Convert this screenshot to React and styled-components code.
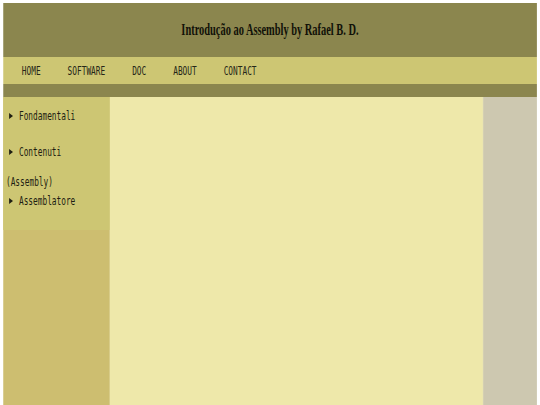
import React from "react";
import styled, { createGlobalStyle } from "styled-components";

const Global = createGlobalStyle`
  html, body {
    margin: 0;
    padding: 0;
    background: #ffffff;
    overflow: hidden;
  }
`;

const Stage = styled.div`
  width: 831px;
  padding: 3px 0 0 4.6px;
  box-sizing: border-box;
  transform: scaleX(0.65);
  transform-origin: 0 0;
`;

const Page = styled.div`
  width: 821.5px;
  display: flex;
  flex-direction: column;
`;

const Header = styled.header`
  height: 54px;
  background: #8b864e;
  display: flex;
  align-items: center;
  justify-content: center;
`;

const Title = styled.h1`
  margin: 0;
  font-family: "Liberation Serif", "Times New Roman", serif;
  font-weight: bold;
  font-size: 16px;
  color: #111108;
`;

const Nav = styled.nav`
  height: 27px;
  background: #cdc673;
  display: flex;
  align-items: center;
  gap: 41.5px;
  padding-left: 29px;
`;

const NavLink = styled.a`
  font-family: "DejaVu Sans Mono", monospace;
  font-size: 12px;
  color: #262618;
  text-decoration: none;
`;

const Band = styled.div`
  height: 13px;
  background: #8b864e;
`;

const Columns = styled.div`
  display: grid;
  grid-template-columns: 164.6px 573.8px 1fr;
  height: 320px;
`;

const Sidebar = styled.aside`
  background: #cdbe70;
`;

const SideBox = styled.div`
  background: #cdc673;
  padding: 9.5px 0 19.5px 4.6px;
  display: flex;
  flex-direction: column;
`;

const SideItem = styled.div`
  font-family: "DejaVu Sans Mono", monospace;
  font-size: 12px;
  line-height: 19px;
  color: #1e1e12;
  margin-top: ${(p) => p.$gap || 0}px;
  display: flex;
  align-items: center;
  padding-left: ${(p) => (p.$marker ? 4.6 : 0)}px;
`;

const Marker = styled.span`
  width: 0;
  height: 0;
  border-top: 3.5px solid transparent;
  border-bottom: 3.5px solid transparent;
  border-left: 6px solid #1e1e12;
  margin-right: 9.4px;
  flex: none;
`;

const Main = styled.main`
  background: #eee8aa;
`;

const Aside = styled.div`
  background: #cdc8b0;
  border-left: 1.5px solid #d9d4b4;
`;

const menu = ["HOME", "SOFTWARE", "DOC", "ABOUT", "CONTACT"];

export default function App() {
  return (
    <>
      <Global />
      <Stage>
        <Page>
          <Header>
            <Title>Introdução ao Assembly by Rafael B. D.</Title>
          </Header>
          <Nav>
            {menu.map((m) => (
              <NavLink key={m} href="#">
                {m}
              </NavLink>
            ))}
          </Nav>
          <Band />
          <Columns>
            <Sidebar>
              <SideBox>
                <SideItem $marker>
                  <Marker />
                  Fondamentali
                </SideItem>
                <SideItem $marker $gap={17}>
                  <Marker />
                  Contenuti
                </SideItem>
                <SideItem $gap={11}>(Assembly)</SideItem>
                <SideItem $marker>
                  <Marker />
                  Assemblatore
                </SideItem>
              </SideBox>
            </Sidebar>
            <Main />
            <Aside />
          </Columns>
        </Page>
      </Stage>
    </>
  );
}
